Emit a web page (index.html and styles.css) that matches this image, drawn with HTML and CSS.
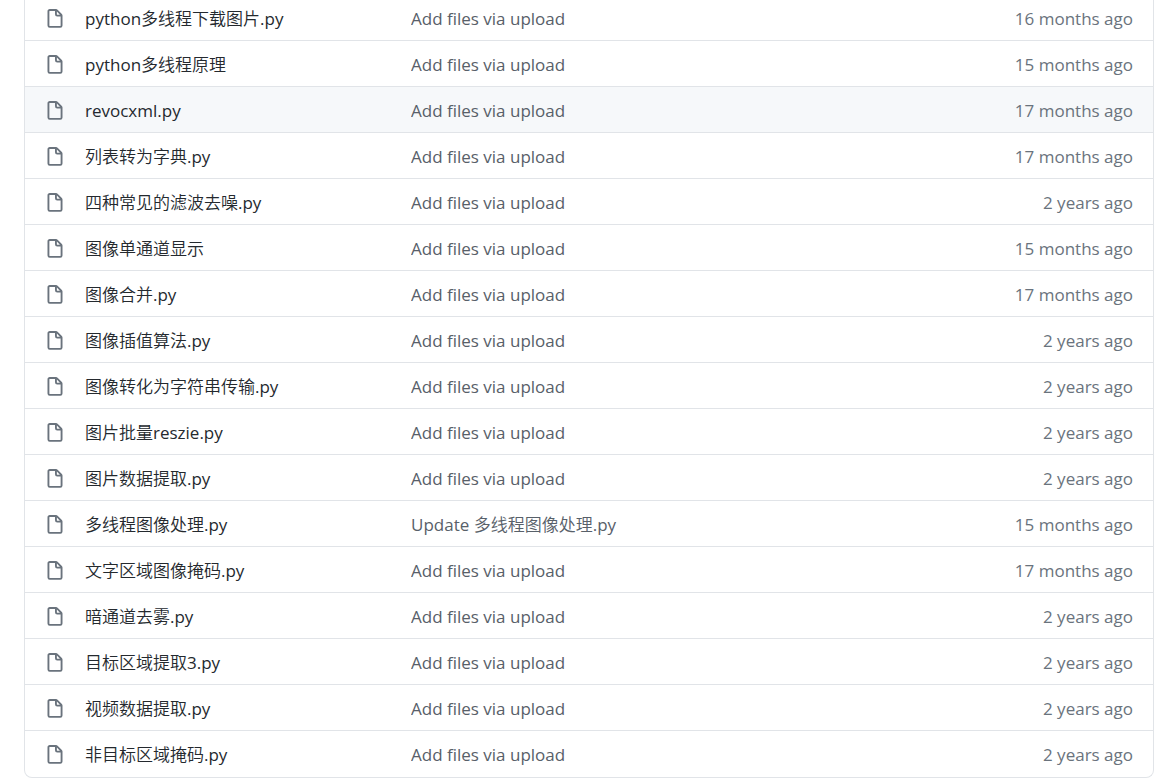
FILE: index.html
```
<!DOCTYPE html>
<html lang="zh-CN">
<head>
<meta charset="utf-8">
<title>Files</title>
<link rel="stylesheet" href="styles.css">
</head>
<body>
<svg class="sprite" aria-hidden="true">
	<symbol id="file" viewBox="0 0 16 16">
		<path fill-rule="evenodd" d="M3.75 1.5a.25.25 0 00-.25.25v11.5c0 .138.112.25.25.25h8.5a.25.25 0 00.25-.25V6H9.75A1.75 1.75 0 018 4.25V1.5H3.75zm5.75.56v2.19c0 .138.112.25.25.25h2.19L9.5 2.06zM2 1.75C2 .784 2.784 0 3.75 0h5.086c.464 0 .909.184 1.237.513l3.414 3.414c.329.328.513.773.513 1.237v8.086A1.75 1.75 0 0112.25 15h-8.5A1.75 1.75 0 012 13.25V1.75z"/>
	</symbol>
</svg>
<div class="box">
<table class="files">
	<tbody>
	<tr>
		<td class="icon"><svg><use href="#file"/></svg></td>
		<td class="name"><a href="#">python多线程下载图片.py</a></td>
		<td class="message"><a href="#">Add files via upload</a></td>
		<td class="age">16 months ago</td>
	</tr>
	<tr>
		<td class="icon"><svg><use href="#file"/></svg></td>
		<td class="name"><a href="#">python多线程原理</a></td>
		<td class="message"><a href="#">Add files via upload</a></td>
		<td class="age">15 months ago</td>
	</tr>
	<tr class="active">
		<td class="icon"><svg><use href="#file"/></svg></td>
		<td class="name"><a href="#">revocxml.py</a></td>
		<td class="message"><a href="#">Add files via upload</a></td>
		<td class="age">17 months ago</td>
	</tr>
	<tr>
		<td class="icon"><svg><use href="#file"/></svg></td>
		<td class="name"><a href="#">列表转为字典.py</a></td>
		<td class="message"><a href="#">Add files via upload</a></td>
		<td class="age">17 months ago</td>
	</tr>
	<tr>
		<td class="icon"><svg><use href="#file"/></svg></td>
		<td class="name"><a href="#">四种常见的滤波去噪.py</a></td>
		<td class="message"><a href="#">Add files via upload</a></td>
		<td class="age">2 years ago</td>
	</tr>
	<tr>
		<td class="icon"><svg><use href="#file"/></svg></td>
		<td class="name"><a href="#">图像单通道显示</a></td>
		<td class="message"><a href="#">Add files via upload</a></td>
		<td class="age">15 months ago</td>
	</tr>
	<tr>
		<td class="icon"><svg><use href="#file"/></svg></td>
		<td class="name"><a href="#">图像合并.py</a></td>
		<td class="message"><a href="#">Add files via upload</a></td>
		<td class="age">17 months ago</td>
	</tr>
	<tr>
		<td class="icon"><svg><use href="#file"/></svg></td>
		<td class="name"><a href="#">图像插值算法.py</a></td>
		<td class="message"><a href="#">Add files via upload</a></td>
		<td class="age">2 years ago</td>
	</tr>
	<tr>
		<td class="icon"><svg><use href="#file"/></svg></td>
		<td class="name"><a href="#">图像转化为字符串传输.py</a></td>
		<td class="message"><a href="#">Add files via upload</a></td>
		<td class="age">2 years ago</td>
	</tr>
	<tr>
		<td class="icon"><svg><use href="#file"/></svg></td>
		<td class="name"><a href="#">图片批量reszie.py</a></td>
		<td class="message"><a href="#">Add files via upload</a></td>
		<td class="age">2 years ago</td>
	</tr>
	<tr>
		<td class="icon"><svg><use href="#file"/></svg></td>
		<td class="name"><a href="#">图片数据提取.py</a></td>
		<td class="message"><a href="#">Add files via upload</a></td>
		<td class="age">2 years ago</td>
	</tr>
	<tr>
		<td class="icon"><svg><use href="#file"/></svg></td>
		<td class="name"><a href="#">多线程图像处理.py</a></td>
		<td class="message"><a href="#">Update 多线程图像处理.py</a></td>
		<td class="age">15 months ago</td>
	</tr>
	<tr>
		<td class="icon"><svg><use href="#file"/></svg></td>
		<td class="name"><a href="#">文字区域图像掩码.py</a></td>
		<td class="message"><a href="#">Add files via upload</a></td>
		<td class="age">17 months ago</td>
	</tr>
	<tr>
		<td class="icon"><svg><use href="#file"/></svg></td>
		<td class="name"><a href="#">暗通道去雾.py</a></td>
		<td class="message"><a href="#">Add files via upload</a></td>
		<td class="age">2 years ago</td>
	</tr>
	<tr>
		<td class="icon"><svg><use href="#file"/></svg></td>
		<td class="name"><a href="#">目标区域提取3.py</a></td>
		<td class="message"><a href="#">Add files via upload</a></td>
		<td class="age">2 years ago</td>
	</tr>
	<tr>
		<td class="icon"><svg><use href="#file"/></svg></td>
		<td class="name"><a href="#">视频数据提取.py</a></td>
		<td class="message"><a href="#">Add files via upload</a></td>
		<td class="age">2 years ago</td>
	</tr>
	<tr>
		<td class="icon"><svg><use href="#file"/></svg></td>
		<td class="name"><a href="#">非目标区域掩码.py</a></td>
		<td class="message"><a href="#">Add files via upload</a></td>
		<td class="age">2 years ago</td>
	</tr>
	</tbody>
</table>
</div>
</body>
</html>
```
FILE: styles.css
```
body {
  margin: 0;
  background: #fff;
  font-family: "Open Sans", "Noto Sans CJK SC DemiLight", "Noto Sans CJK SC", sans-serif;
  font-size: 17px;
  line-height: 25px;
}
.sprite {
  display: none;
}
.box {
  margin: 0 21px 6px 24px;
  border: 1px solid #e1e4e8;
  border-top: 0;
  border-radius: 0 0 8px 8px;
  overflow: hidden;
}
.files {
  width: 100%;
  table-layout: fixed;
  border-collapse: separate;
  border-spacing: 0;
}
.files td {
  height: 25px;
  padding: 11px 0 9px;
  border-bottom: 1px solid #e1e4e8;
  white-space: nowrap;
  overflow: hidden;
  text-overflow: ellipsis;
}
/* the list continues above the window */
.files tr:first-child td {
  padding-top: 6px;
}
.files tr:last-child td {
  padding-bottom: 10px;
  border-bottom: 0;
}
.files .active td {
  background: #f6f8fa;
}
.files .icon {
  width: 40px;
  padding-left: 20px;
}
.icon svg {
  display: block;
  width: 20px;
  height: 20px;
  fill: #6a737d;
}
.files .name {
  width: 326px;
}
.name a {
  color: #24292e;
}
.message a {
  color: #586069;
}
.files .age {
  width: 160px;
  padding-right: 20px;
  color: #6a737d;
  text-align: right;
}
a {
  text-decoration: none;
}
```
